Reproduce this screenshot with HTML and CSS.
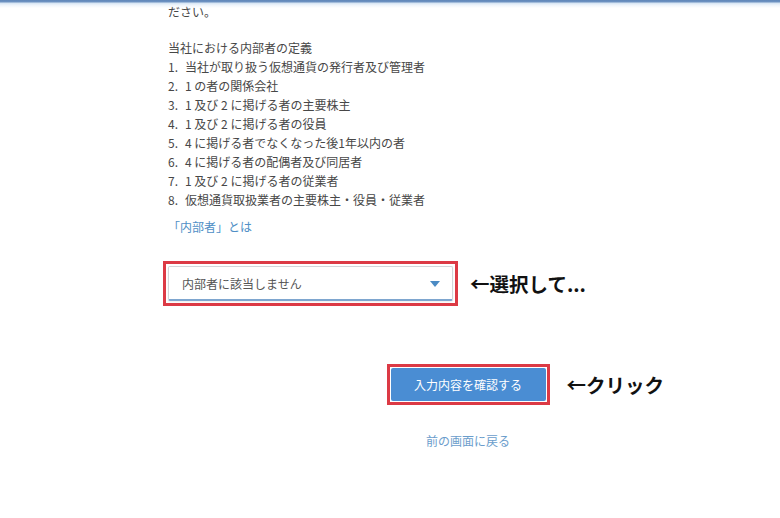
FILE: index.html
```
<!DOCTYPE html>
<html lang="ja">
<head>
<meta charset="utf-8">
<title>内部者の確認</title>
<link rel="stylesheet" href="styles.css">
</head>
<body>
<div class="topbar"></div>
<main class="page">
  <p class="lead">ださい。</p>
  <div class="definition">
    <p class="def-title">当社における内部者の定義</p>
    <ol class="def-list">
      <li><span class="num">1.</span>当社が取り扱う仮想通貨の発行者及び管理者</li>
      <li><span class="num">2.</span>1&nbsp;の者の関係会社</li>
      <li><span class="num">3.</span>1&nbsp;及び&nbsp;2&nbsp;に掲げる者の主要株主</li>
      <li><span class="num">4.</span>1&nbsp;及び&nbsp;2&nbsp;に掲げる者の役員</li>
      <li><span class="num">5.</span>4&nbsp;に掲げる者でなくなった後1年以内の者</li>
      <li><span class="num">6.</span>4&nbsp;に掲げる者の配偶者及び同居者</li>
      <li><span class="num">7.</span>1&nbsp;及び&nbsp;2&nbsp;に掲げる者の従業者</li>
      <li><span class="num">8.</span>仮想通貨取扱業者の主要株主・役員・従業者</li>
    </ol>
    <a class="def-link" href="#">「内部者」とは</a>
  </div>

  <div class="select-row">
    <div class="highlight select-hl">
      <div class="select">
        <span class="select-text">内部者に該当しません</span>
        <span class="caret"></span>
      </div>
    </div>
    <span class="note">←選択して...</span>
  </div>

  <div class="button-row">
    <div class="highlight button-hl">
      <button class="confirm" type="button">入力内容を確認する</button>
    </div>
    <span class="note note-click">←クリック</span>
  </div>

  <div class="back-row">
    <a class="back" href="#">前の画面に戻る</a>
  </div>
</main>
</body>
</html>
```

FILE: styles.css
```
* { box-sizing: border-box; }

html, body {
  margin: 0;
  padding: 0;
}

body {
  width: 780px;
  height: 518px;
  overflow: hidden;
  background: #fff;
  font-family: "Noto Sans CJK JP", "Noto Sans", sans-serif;
  color: #474747;
  position: relative;
}

.topbar {
  position: absolute;
  left: 0;
  top: 0;
  width: 100%;
  height: 8px;
  background: linear-gradient(#5f86b9 0, #6f93c2 2px, #d5e4f3 3px, #eef4fb 5px, rgba(255,255,255,0) 8px);
  z-index: 2;
}

.page {
  width: 600px;
  margin-left: 168px;
  padding-top: 2px;
  font-size: 12px;
  line-height: 19px;
}

.lead {
  margin: 0 0 17px;
}

.definition {
  display: flex;
  flex-direction: column;
  align-items: flex-start;
}

.def-title {
  margin: 0;
}

.def-list {
  list-style: none;
  margin: 0;
  padding: 0;
}

.def-list li {
  display: flex;
  white-space: pre;
}

.num {
  display: inline-block;
  width: 17px;
  flex: none;
}

.def-link {
  margin-top: 8px;
  color: #4f8fc6;
  text-decoration: none;
  font-size: 12px;
}

.select-row {
  display: flex;
  align-items: center;
  gap: 12px;
  margin-top: 25px;
  margin-left: -5px;
}

.highlight {
  border: 3px solid #dc3a45;
}

.select-hl {
  width: 295px;
  padding: 2px;
}

.select {
  height: 35px;
  display: flex;
  align-items: center;
  justify-content: space-between;
  padding: 0 12px 0 13px;
  border: 1px solid #d3d6da;
  border-bottom: 2px solid #7ea6cf;
  border-radius: 2px;
  background: #fff;
  box-shadow: 0 1px 2px rgba(0,0,0,0.08);
}

.select-text {
  font-size: 12px;
  color: #555;
}

.caret {
  width: 0;
  height: 0;
  border-left: 5.5px solid transparent;
  border-right: 5.5px solid transparent;
  border-top: 6px solid #4b8bc4;
  margin-top: 1px;
}

.note {
  font-size: 19.5px;
  font-weight: bold;
  color: #111;
  line-height: 26px;
  white-space: nowrap;
}

.button-row {
  display: grid;
  grid-template-columns: 1fr auto 1fr;
  align-items: center;
  margin-top: 58px;
}

.button-hl {
  grid-column: 2;
  width: 163px;
  height: 41px;
  padding: 1px;
}

.confirm {
  width: 100%;
  height: 100%;
  border: none;
  border-radius: 2px;
  background: #4a8dd3;
  color: #fff;
  font-family: "Noto Sans CJK JP", "Noto Sans", sans-serif;
  font-size: 12px;
  padding: 0;
}

.note-click {
  grid-column: 3;
  margin-left: 17px;
}

.back-row {
  display: flex;
  justify-content: center;
  margin-top: 26px;
}

.back {
  color: #6b9dcc;
  text-decoration: none;
  font-size: 12px;
}
```
